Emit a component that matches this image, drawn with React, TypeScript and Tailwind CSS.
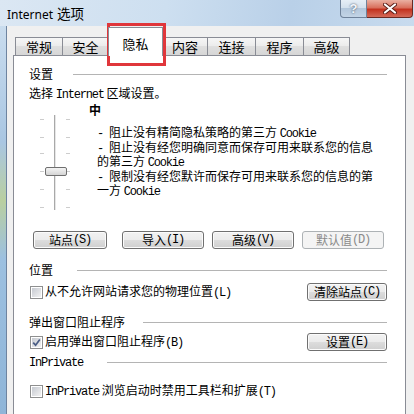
import React from "react";

const M = ({ children }: { children: React.ReactNode }) => (
  <span className="font-['Liberation_Mono',monospace] tracking-[-1.2px]">{children}</span>
);

const Header = ({ label, gap }: { label: React.ReactNode; gap: string }) => (
  <div className="flex items-center h-[14px]">
    <span className="whitespace-pre">{label}</span>
    <div className={`flex-1 h-px bg-[#b4b4b4] ${gap}`} />
  </div>
);

const Btn = ({ children, w, disabled }: { children: React.ReactNode; w: string; disabled?: boolean }) => (
  <div
    className={`${w} h-[18px] shrink-0 rounded-[3px] border flex items-center justify-center whitespace-pre ${
      disabled
        ? "border-[#adb2b5] bg-[#f4f4f4] text-[#8a8a8a]"
        : "border-[#707070] bg-[linear-gradient(#f2f2f2_0%,#ebebeb_50%,#dddddd_50%,#cfcfcf_100%)] shadow-[inset_0_0_0_1px_#fbfbfb]"
    }`}
  >
    {children}
  </div>
);

const Box = ({ checked }: { checked?: boolean }) => (
  <span className="ml-px w-[13px] h-[13px] shrink-0 border border-[#8e8f8f] bg-white p-px flex">
    <span className="flex-1 flex items-center justify-center bg-gradient-to-br from-[#c6cad1] to-[#f2f2f2]">
      {checked && (
        <svg width="9" height="9" viewBox="0 0 9 9">
          <path d="M1.2 4.6 L3.6 7.2 L7.8 1.4" fill="none" stroke="#4a5d85" strokeWidth="1.7" />
        </svg>
      )}
    </span>
  </span>
);

const Tab = ({ label, w, active }: { label: string; w: string; active?: boolean }) => (
  <div
    className={`${w} -ml-px first:ml-0 border-x border-t border-[#898c95] flex justify-center text-[13px] leading-[14px] ${
      active
        ? "h-[29px] -mb-px relative z-10 bg-white pt-[9px]"
        : "h-[18px] items-center bg-[linear-gradient(#f6f6f6_0%,#ebebeb_50%,#dfdfdf_50%,#d6d6d6_100%)]"
    }`}
  >
    {label}
  </div>
);

const ticks = [6, 24, 40, 58, 76, 94];

const Slider = () => (
  <svg width="34" height="100" viewBox="0 0 34 100">
    {ticks.map((y) => (
      <g key={y}>
        <rect x="2" y={y} width="4" height="1" fill="#cdcdcd" />
        <rect x="28" y={y} width="4" height="1" fill="#cdcdcd" />
      </g>
    ))}
    <rect x="16" y="2" width="1" height="95" fill="#a9a9a9" />
    <rect x="17" y="2" width="1" height="95" fill="#e6e6e6" />
    <defs>
      <linearGradient id="th" x1="0" y1="0" x2="0" y2="1">
        <stop offset="0" stopColor="#f6f6f6" />
        <stop offset="1" stopColor="#d2d2d2" />
      </linearGradient>
    </defs>
    <rect x="7.5" y="54.5" width="21" height="8" rx="1.5" fill="url(#th)" stroke="#6f6f6f" />
  </svg>
);

export default function App() {
  return (
    <div className="w-[414px] h-[414px] overflow-hidden relative flex flex-col bg-[#c4d7ea] font-['Noto_Sans_CJK_SC',sans-serif] text-[12px] leading-[14px] text-black">
      {/* title bar */}
      <div className="h-[26px] shrink-0 flex items-start bg-[linear-gradient(100deg,#dbe7f3_0%,#cddff0_40%,#b9d0e8_70%,#c8dbee_100%)]">
        <div className="pl-[7px] pt-[6px] flex items-baseline">
          <span className="font-['Noto_Sans',sans-serif] text-[12px]">Internet</span>
          <span className="ml-[4px] text-[13.5px]">选项</span>
        </div>
        <div className="ml-auto mr-px flex">
          <div className="w-[27px] h-[18px] rounded-bl-[4px] border border-t-0 border-[#6f829a] bg-[linear-gradient(#e6eef6_0%,#d2dfec_50%,#b3c7dc_50%,#c3d4e6_100%)] flex items-center justify-center font-['Liberation_Sans',sans-serif] font-bold text-[13px] text-[#f3f6fa] [text-shadow:0_0_2px_#2f3e52]">
            ?
          </div>
          <div className="w-[46px] h-[18px] rounded-br-[4px] border border-t-0 border-l-0 border-[#6b2a22] bg-[linear-gradient(#eab0a2_0%,#d9705d_45%,#c3321f_55%,#d46a58_100%)] flex items-center justify-center">
            <svg width="14" height="11" viewBox="0 0 14 11">
              <path d="M2 1.5 L12 9.5 M12 1.5 L2 9.5" stroke="#5a1e18" strokeWidth="4" strokeLinecap="round" />
              <path d="M2 1.5 L12 9.5 M12 1.5 L2 9.5" stroke="#ffffff" strokeWidth="2.2" strokeLinecap="round" />
            </svg>
          </div>
        </div>
      </div>

      <div className="flex-1 flex min-h-0">
        <div className="w-[6px] bg-[linear-gradient(#c9dcee_0%,#a9c6e2_30%,#b9cfa0_45%,#9cc0e0_60%,#8fb5d8_100%)]" />
        <div className="w-px bg-[#6e84a0]" />
        <div className="flex-1 bg-[#f0f0f0] pl-[6px] pr-[8px] pt-px flex flex-col min-w-0">
          {/* tabs */}
          <div className="h-[28px] ml-[2px] flex items-end shrink-0">
            <Tab label="常规" w="w-[48px]" />
            <Tab label="安全" w="w-[47px]" />
            <Tab label="隐私" w="w-[55px]" active />
            <Tab label="内容" w="w-[46px]" />
            <Tab label="连接" w="w-[49px]" />
            <Tab label="程序" w="w-[49px]" />
            <Tab label="高级" w="w-[47px]" />
          </div>

          {/* panel */}
          <div className="flex-1 border-x border-t border-[#898c95] bg-white pl-[15px] pr-[18px] pt-[11px] flex flex-col">
            <Header label="设置" gap="ml-[20px]" />
            <div className="mt-[5px] h-[14px] whitespace-pre">
              选择 <M>Internet</M> 区域设置。
            </div>

            <div className="mt-[3px] flex">
              <div className="ml-[9px] mt-[10px] shrink-0">
                <Slider />
              </div>
              <div className="ml-[17px] flex flex-col">
                <div className="h-[14px] font-bold">中</div>
                <div className="ml-[8px] mt-[9px] leading-[12.5px] whitespace-pre">
                  <div>
                    <M>- </M>阻止没有精简隐私策略的第三方 <M>Cookie</M>
                  </div>
                  <div>
                    <M>- </M>阻止没有经您明确同意而保存可用来联系您的信息
                  </div>
                  <div>
                    的第三方 <M>Cookie</M>
                  </div>
                  <div>
                    <M>- </M>限制没有经您默许而保存可用来联系您的信息的第
                  </div>
                  <div>
                    一方 <M>Cookie</M>
                  </div>
                </div>
              </div>
            </div>

            <div className="mt-[18px] flex">
              <div className="ml-[4px]">
                <Btn w="w-[74px]">
                  站点<M>(S)</M>
                </Btn>
              </div>
              <div className="ml-[15px]">
                <Btn w="w-[82px]">
                  导入<M>(I)</M>
                </Btn>
              </div>
              <div className="ml-[8px]">
                <Btn w="w-[82px]">
                  高级<M>(V)</M>
                </Btn>
              </div>
              <div className="ml-[8px]">
                <Btn w="w-[82px]" disabled>
                  默认值<M>(D)</M>
                </Btn>
              </div>
            </div>

            <div className="mt-[14px]">
              <Header label="位置" gap="ml-[24px]" />
            </div>
            <div className="mt-[6px] h-[18px] flex items-center">
              <Box />
              <span className="ml-[2px] whitespace-pre">
                从不允许网站请求您的物理位置<M>(L)</M>
              </span>
              <div className="ml-auto">
                <Btn w="w-[80px]">
                  清除站点<M>(C)</M>
                </Btn>
              </div>
            </div>

            <div className="mt-[14px]">
              <Header label="弹出窗口阻止程序" gap="ml-[18px]" />
            </div>
            <div className="mt-[4px] h-[18px] flex items-center">
              <Box checked />
              <span className="ml-[2px] whitespace-pre">
                启用弹出窗口阻止程序<M>(B)</M>
              </span>
              <div className="ml-auto">
                <Btn w="w-[80px]">
                  设置<M>(E)</M>
                </Btn>
              </div>
            </div>

            <div className="mt-[4px]">
              <Header label={<M>InPrivate</M>} gap="ml-[24px]" />
            </div>
            <div className="mt-[13px] h-[18px] flex items-center">
              <Box />
              <span className="ml-[2px] whitespace-pre">
                <M>InPrivate</M> 浏览启动时禁用工具栏和扩展<M>(T)</M>
              </span>
            </div>
          </div>
        </div>
      </div>

      {/* red highlight annotation around the active tab */}
      <div className="absolute left-[107px] top-[23px] w-[59px] h-[43px] border-[3px] border-[#e0363b]" />
    </div>
  );
}
